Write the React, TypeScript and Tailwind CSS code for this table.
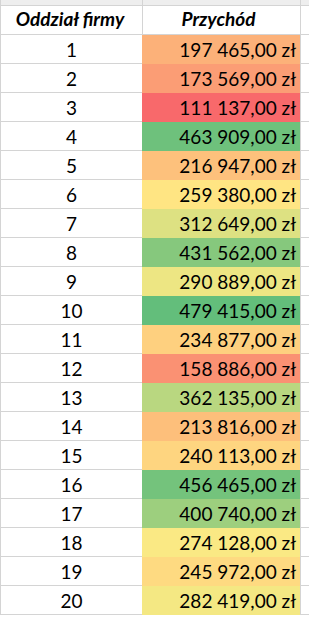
import { FC } from 'react';

const rows: { id: number; value: string; color: string }[] = [
  { id: 1, value: '197 465,00 zł', color: 'bg-[#fcb179]' },
  { id: 2, value: '173 569,00 zł', color: 'bg-[#fb9d75]' },
  { id: 3, value: '111 137,00 zł', color: 'bg-[#f8696b]' },
  { id: 4, value: '463 909,00 zł', color: 'bg-[#6ec17c]' },
  { id: 5, value: '216 947,00 zł', color: 'bg-[#fdc17c]' },
  { id: 6, value: '259 380,00 zł', color: 'bg-[#ffe583]' },
  { id: 7, value: '312 649,00 zł', color: 'bg-[#dde182]' },
  { id: 8, value: '431 562,00 zł', color: 'bg-[#86c87d]' },
  { id: 9, value: '290 889,00 zł', color: 'bg-[#ede683]' },
  { id: 10, value: '479 415,00 zł', color: 'bg-[#63be7b]' },
  { id: 11, value: '234 877,00 zł', color: 'bg-[#fed07f]' },
  { id: 12, value: '158 886,00 zł', color: 'bg-[#fa9173]' },
  { id: 13, value: '362 135,00 zł', color: 'bg-[#b9d780]' },
  { id: 14, value: '213 816,00 zł', color: 'bg-[#fdbf7b]' },
  { id: 15, value: '240 113,00 zł', color: 'bg-[#fed580]' },
  { id: 16, value: '456 465,00 zł', color: 'bg-[#74c37c]' },
  { id: 17, value: '400 740,00 zł', color: 'bg-[#9dcf7e]' },
  { id: 18, value: '274 128,00 zł', color: 'bg-[#fae984]' },
  { id: 19, value: '245 972,00 zł', color: 'bg-[#feda81]' },
  { id: 20, value: '282 419,00 zł', color: 'bg-[#f4e883]' },
];

const App: FC = () => {
  return (
    <div className="w-[309px] h-[621px] overflow-hidden bg-white text-black font-['Lato',sans-serif]">
      {/* partial row above the header */}
      <div className="flex h-[6px] bg-[#eeeeee] border-b border-[#d4d4d4]">
        <div className="w-[143px] border-l border-r border-[#d4d4d4]" />
        <div className="w-[158px] border-r border-[#d4d4d4]" />
      </div>

      {/* header */}
      <div className="flex h-[29px] border-b border-[#d4d4d4] text-[19px] font-bold italic">
        <div className="w-[143px] flex items-center justify-center border-l border-r border-[#d4d4d4] pb-[1px] pr-[3px]">
          Oddział firmy
        </div>
        <div className="w-[158px] flex items-center justify-center border-r border-[#d4d4d4] pb-[1px] pr-[6px]">
          Przychód
        </div>
      </div>

      {rows.map(row => (
        <div key={row.id} className="flex h-[29px] text-[19px]">
          <div className="w-[142px] flex items-center justify-center border-l border-b border-[#d4d4d4] pt-[2px]">
            {row.id}
          </div>
          <div className={`w-[159px] flex items-center border-r border-[#d4d4d4] ${row.color}`}>
            <span className="flex-1 text-right pr-[4px] pt-[2px]">{row.value}</span>
          </div>
          <div className="flex-1 border-b border-[#d4d4d4]" />
        </div>
      ))}
    </div>
  );
};

export default App;
